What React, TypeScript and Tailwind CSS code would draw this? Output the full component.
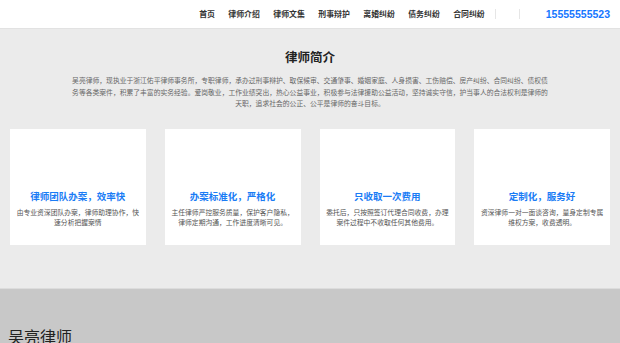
import React from "react"

const navItems = ["首页", "律师介绍", "律师文集", "刑事辩护", "离婚纠纷", "债务纠纷", "合同纠纷"]

const features = [
  {
    title: "律师团队办案，效率快",
    lines: ["由专业资深团队办案，律师助理协作，快", "速分析把握案情"],
  },
  {
    title: "办案标准化，严格化",
    lines: ["主任律师严控服务质量，保护客户隐私，", "律师定期沟通，工作进度清晰可见。"],
  },
  {
    title: "只收取一次费用",
    lines: ["委托后，只按照签订代理合同收费，办理", "案件过程中不收取任何其他费用。"],
  },
  {
    title: "定制化，服务好",
    lines: ["资深律师一对一面谈咨询，量身定制专属", "维权方案，收费透明。"],
  },
]

const intro = [
  "吴亮律师，现执业于浙江佑平律师事务所，专职律师，承办过刑事辩护、取保候审、交通肇事、婚姻家庭、人身损害、工伤赔偿、房产纠纷、合同纠纷、债权债",
  "务等各类案件，积累了丰富的实务经验。爱岗敬业，工作业绩突出，热心公益事业，积极参与法律援助公益活动，坚持诚实守信，护当事人的合法权利是律师的",
  "天职，追求社会的公正、公平是律师的奋斗目标。",
]

export default function App() {
  return (
    <div className="w-[620px] h-[343px] overflow-hidden bg-[#ebebeb] font-['Noto_Sans_CJK_SC','Noto_Sans',sans-serif]">
      {/* Header */}
      <header className="h-[29px] bg-white border-b border-[#e2e2e2] flex items-center justify-end pr-[10px]">
        <nav className="flex items-center gap-[13.4px]">
          {navItems.map(item => (
            <span key={item} className="text-[7.9px] leading-none font-bold text-[#333]">
              {item}
            </span>
          ))}
        </nav>
        <div className="ml-[10px] w-px h-[10px] bg-[#e6e6e6]" />
        <div className="ml-[23px] w-px h-[10px] bg-[#e6e6e6]" />
        <div className="ml-[26px] text-[10.5px] leading-none font-bold text-[#1677ff] font-['Liberation_Sans',sans-serif]">
          15555555523
        </div>
      </header>

      {/* 律师简介 */}
      <section className="pt-[20px] pb-[43px]">
        <h2 className="text-center text-[12.5px] leading-[16px] font-bold text-[#222]">律师简介</h2>
        <div className="mt-[10px] flex flex-col items-center text-[6.8px] leading-[11.5px] text-[#666]">
          {intro.map(line => (
            <p key={line} className="whitespace-nowrap">{line}</p>
          ))}
        </div>

        <div className="mt-[19px] px-[10px] grid grid-cols-4 gap-[19px]">
          {features.map(f => (
            <div key={f.title} className="h-[116px] bg-white pt-[61px] px-[4px] text-center">
              <div className="text-[9.5px] leading-[13px] font-bold text-[#1a7cf5]">{f.title}</div>
              <div className="mt-[4px] text-[6.8px] leading-[10px] text-[#555]">
                {f.lines.map(l => (
                  <p key={l} className="whitespace-nowrap">{l}</p>
                ))}
              </div>
            </div>
          ))}
        </div>
      </section>

      {/* Footer */}
      <footer className="h-[60px] bg-[#c8c8c8] border-t border-[#dcdcdc] pt-[37px] pl-[8px]">
        <div className="text-[16px] leading-[20px] text-[#222]">吴亮律师</div>
      </footer>
    </div>
  )
}
